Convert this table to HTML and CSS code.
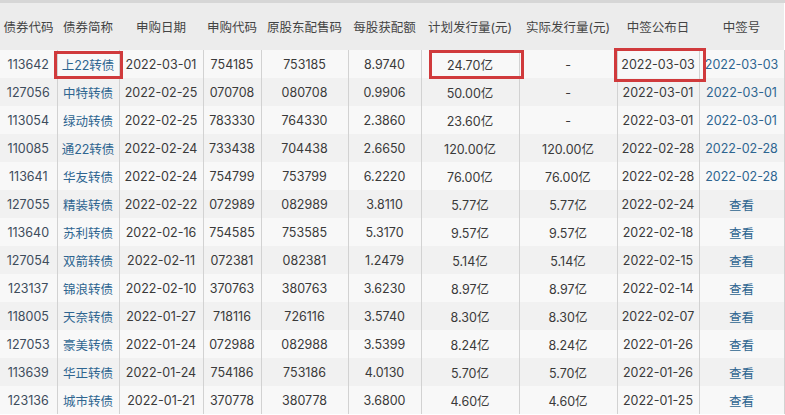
FILE: index.html
```html
<!DOCTYPE html>
<html lang="zh-CN">
<head>
<meta charset="utf-8">
<title>可转债申购</title>
<link rel="stylesheet" href="styles.css">
</head>
<body>
<div class="wrap">
<table class="bonds">
<colgroup>
<col class="c1"><col class="c2"><col class="c3"><col class="c4"><col class="c5"><col class="c6"><col class="c7"><col class="c8"><col class="c9"><col class="c10">
</colgroup>
<thead>
<tr>
<th>债券代码</th><th>债券简称</th><th>申购日期</th><th>申购代码</th><th>原股东配售码</th><th>每股获配额</th><th>计划发行量(元)</th><th>实际发行量(元)</th><th>中签公布日</th><th>中签号</th>
</tr>
</thead>
<tbody>
<tr><td class="code">113642</td><td class="mark"><a>上22转债</a><span class="box box-name"></span></td><td>2022-03-01</td><td>754185</td><td>753185</td><td>8.9740</td><td class="mark">24.70亿<span class="box box-plan"></span></td><td>-</td><td class="mark">2022-03-03<span class="box box-date"></span></td><td><a>2022-03-03</a></td></tr>
<tr><td class="code">127056</td><td><a>中特转债</a></td><td>2022-02-25</td><td>070708</td><td>080708</td><td>0.9906</td><td>50.00亿</td><td>-</td><td>2022-03-01</td><td><a>2022-03-01</a></td></tr>
<tr><td class="code">113054</td><td><a>绿动转债</a></td><td>2022-02-25</td><td>783330</td><td>764330</td><td>2.3860</td><td>23.60亿</td><td>-</td><td>2022-03-01</td><td><a>2022-03-01</a></td></tr>
<tr><td class="code">110085</td><td><a>通22转债</a></td><td>2022-02-24</td><td>733438</td><td>704438</td><td>2.6650</td><td>120.00亿</td><td>120.00亿</td><td>2022-02-28</td><td><a>2022-02-28</a></td></tr>
<tr><td class="code">113641</td><td><a>华友转债</a></td><td>2022-02-24</td><td>754799</td><td>753799</td><td>6.2220</td><td>76.00亿</td><td>76.00亿</td><td>2022-02-28</td><td><a>2022-02-28</a></td></tr>
<tr><td class="code">127055</td><td><a>精装转债</a></td><td>2022-02-22</td><td>072989</td><td>082989</td><td>3.8110</td><td>5.77亿</td><td>5.77亿</td><td>2022-02-24</td><td><a>查看</a></td></tr>
<tr><td class="code">113640</td><td><a>苏利转债</a></td><td>2022-02-16</td><td>754585</td><td>753585</td><td>5.3170</td><td>9.57亿</td><td>9.57亿</td><td>2022-02-18</td><td><a>查看</a></td></tr>
<tr><td class="code">127054</td><td><a>双箭转债</a></td><td>2022-02-11</td><td>072381</td><td>082381</td><td>1.2479</td><td>5.14亿</td><td>5.14亿</td><td>2022-02-15</td><td><a>查看</a></td></tr>
<tr><td class="code">123137</td><td><a>锦浪转债</a></td><td>2022-02-10</td><td>370763</td><td>380763</td><td>3.6230</td><td>8.97亿</td><td>8.97亿</td><td>2022-02-14</td><td><a>查看</a></td></tr>
<tr><td class="code">118005</td><td><a>天奈转债</a></td><td>2022-01-27</td><td>718116</td><td>726116</td><td>3.5740</td><td>8.30亿</td><td>8.30亿</td><td>2022-02-07</td><td><a>查看</a></td></tr>
<tr><td class="code">127053</td><td><a>豪美转债</a></td><td>2022-01-24</td><td>072988</td><td>082988</td><td>3.5399</td><td>8.24亿</td><td>8.24亿</td><td>2022-01-26</td><td><a>查看</a></td></tr>
<tr><td class="code">113639</td><td><a>华正转债</a></td><td>2022-01-24</td><td>754186</td><td>753186</td><td>4.0130</td><td>5.70亿</td><td>5.70亿</td><td>2022-01-26</td><td><a>查看</a></td></tr>
<tr><td class="code">123136</td><td><a>城市转债</a></td><td>2022-01-21</td><td>370778</td><td>380778</td><td>3.6800</td><td>4.60亿</td><td>4.60亿</td><td>2022-01-25</td><td><a>查看</a></td></tr>
</tbody>
</table>
</div>
</body>
</html>
```

FILE: styles.css
```css
html, body {
  margin: 0;
  padding: 0;
  background: #ffffff;
}

body {
  font-family: "Inter", "Noto Sans CJK SC", sans-serif;
  font-size: 12.5px;
  color: #3a3a3a;
  overflow: hidden;
}

.wrap {
  width: 785px;
  border-top: 3px solid #d6d6d6;
}

.bonds {
  width: 784px;
  table-layout: fixed;
  border-collapse: collapse;
}

.c1 { width: 57px; }
.c2 { width: 62px; }
.c3 { width: 84px; }
.c4 { width: 58px; }
.c5 { width: 87px; }
.c6 { width: 73px; }
.c7 { width: 98px; }
.c8 { width: 98px; }
.c9 { width: 82px; }
.c10 { width: 85px; }

.bonds th {
  height: 47px;
  padding: 0;
  background: #ececec;
  font-weight: normal;
  color: #444;
  white-space: nowrap;
  text-align: center;
}

.bonds td {
  height: 28px;
  padding: 0;
  text-align: center;
  white-space: nowrap;
  border-left: 1px solid #d2d2d2;
  border-right: 1px solid #d2d2d2;
  color: #3a3a3a;
}

.bonds tbody tr:nth-child(odd) td { background: #f8f8f8; }
.bonds tbody tr:nth-child(even) td { background: #f1f1f1; }

.bonds td:first-child { border-left: none; }

.bonds td.code { color: #3d4c5c; }

.bonds a {
  color: #2e6590;
  text-decoration: none;
}

.mark { position: relative; }

.box {
  position: absolute;
  border: 3px solid #d03a3c;
  pointer-events: none;
}

.box-name { left: -4px; top: 1px; right: -4px; bottom: -1px; }
.box-plan { left: 7px; top: 0; right: -5px; bottom: -1px; }
.box-date { left: -4px; top: -2px; right: -7px; bottom: -4px; }
```
